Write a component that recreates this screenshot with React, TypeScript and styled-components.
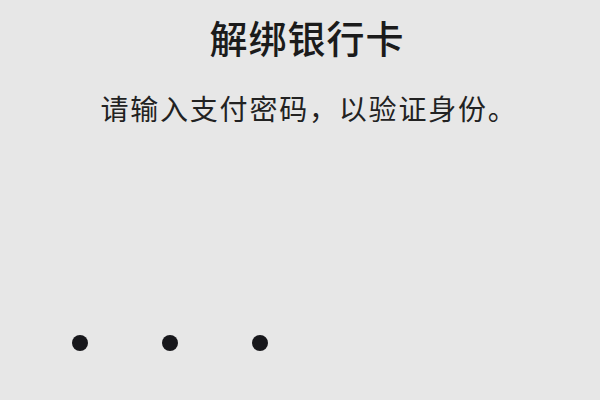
import styled, { createGlobalStyle } from 'styled-components'

const GlobalStyle = createGlobalStyle`
    html, body {
        margin: 0;
        padding: 0;
        background: #e7e7e7;
    }
    body {
        font-family: "Noto Sans CJK SC", "Noto Sans", sans-serif;
        color: #1b1b1b;
    }
`

const PIN_LENGTH = 3

export default function App() {
    return (
        <>
            <GlobalStyle />
            <PageSld>
                <TitleSld>解绑银行卡</TitleSld>
                <HintSld>请输入支付密码，以验证身份。</HintSld>
                <PinRowSld>
                    {Array.from({ length: PIN_LENGTH }).map((_, i) => (
                        <PinCellSld key={i}>
                            <DotSld />
                        </PinCellSld>
                    ))}
                </PinRowSld>
            </PageSld>
        </>
    )
}

const PageSld = styled.main`
    width: 600px;
    height: 400px;
    display: flex;
    flex-direction: column;
    align-items: center;
    overflow: hidden;
`

const TitleSld = styled.h1`
    margin: 14px 0 0 14px;
    font-size: 38px;
    line-height: 46px;
    font-weight: 500;
    letter-spacing: 1px;
`

const HintSld = styled.p`
    margin: 28px 0 0 18px;
    font-size: 28px;
    line-height: 40px;
    font-weight: 400;
    letter-spacing: 1.8px;
    color: #222;
`

const PinRowSld = styled.div`
    align-self: stretch;
    display: flex;
    margin-top: 200px;
    padding-left: 35px;
`

const PinCellSld = styled.div`
    width: 90px;
    height: 30px;
    display: flex;
    align-items: center;
    justify-content: center;
`

const DotSld = styled.span`
    width: 16px;
    height: 16px;
    border-radius: 50%;
    background: #17171b;
`
